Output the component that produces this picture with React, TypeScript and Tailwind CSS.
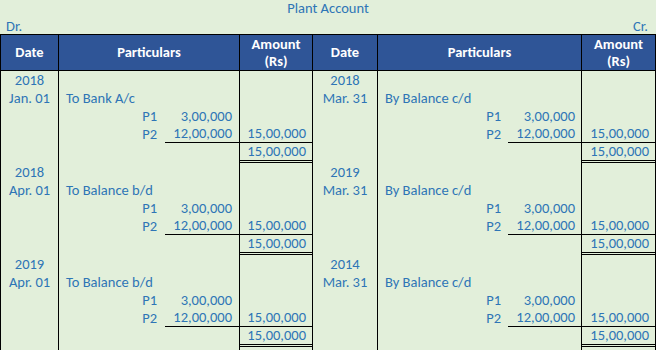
import React from 'react'

type Side = { date?: string; part?: string; sub?: [string, string]; amt?: string }
type Kind = 'plain' | 'p2' | 'total' | 'empty'

const grid = 'grid grid-cols-[59px_181px_73px_65px_204px_74px]'
const font = "font-['Calibri','Carlito','Open_Sans',sans-serif]"

const blocks = [
  { ly: '2018', ld: 'Jan. 01', lp: 'To Bank A/c', ry: '2018', rd: 'Mar. 31', rp: 'By Balance c/d' },
  { ly: '2018', ld: 'Apr. 01', lp: 'To Balance b/d', ry: '2019', rd: 'Mar. 31', rp: 'By Balance c/d' },
  { ly: '2019', ld: 'Apr. 01', lp: 'To Balance b/d', ry: '2014', rd: 'Mar. 31', rp: 'By Balance c/d' },
]

function Cells({ s, kind, right }: { s: Side; kind: Kind; right?: boolean }) {
  const amtBorder =
    kind === 'p2' ? 'border-b border-black' : kind === 'total' ? 'border-b-[3px] border-double border-black' : ''
  return (
    <>
      <div className={`flex items-center justify-center border-r border-black ${right ? '' : 'border-l'}`}>
        {s.date}
      </div>
      <div className={`flex items-stretch border-r border-black ${s.sub ? 'justify-end' : ''}`}>
        {s.part && <span className="flex items-center pl-[7px]">{s.part}</span>}
        {s.sub && (
          <>
            <span className={`flex items-center ${right ? 'mr-[7px]' : 'mr-2'}`}>{s.sub[0]}</span>
            <span
              className={`flex items-center justify-end ${right ? 'w-[73px] pr-[6px]' : 'w-[74px] pr-[7px]'} ${
                kind === 'p2' ? 'border-b border-black' : ''
              }`}
            >
              {s.sub[1]}
            </span>
          </>
        )}
      </div>
      <div className={`flex items-center justify-end pr-[6px] border-r border-black ${amtBorder}`}>{s.amt}</div>
    </>
  )
}

function Row({ l = {}, r = {}, kind = 'plain' }: { l?: Side; r?: Side; kind?: Kind }) {
  const h = kind === 'total' || kind === 'empty' ? 'h-[20px]' : 'h-[18px]'
  return (
    <div className={`${grid} ${h}`}>
      <Cells s={l} kind={kind} />
      <Cells s={r} kind={kind} right />
    </div>
  )
}

export default function App() {
  return (
    <div className={`w-[656px] h-[350px] overflow-hidden bg-[#e2efda] text-[#2e75b6] text-[14.5px] leading-none ${font}`}>
      <div className="h-[17px] flex items-center justify-center">Plant Account</div>
      <div className="h-[17px] flex items-center justify-between pl-[6px] pr-[8px] pt-px">
        <span>Dr.</span>
        <span>Cr.</span>
      </div>
      <div className={`${grid} h-[37px] border-y border-black bg-[#2f5597] text-white font-bold`}>
        <div className="flex items-center justify-center border-x border-black">Date</div>
        <div className="flex items-center justify-center border-r border-black">Particulars</div>
        <div className="flex flex-col items-center justify-center border-r border-black leading-[17px]">
          <span>Amount</span>
          <span>(Rs)</span>
        </div>
        <div className="flex items-center justify-center border-r border-black">Date</div>
        <div className="flex items-center justify-center border-r border-black">Particulars</div>
        <div className="flex flex-col items-center justify-center border-r border-black leading-[17px]">
          <span>Amount</span>
          <span>(Rs)</span>
        </div>
      </div>
      {blocks.map((b, i) => (
        <React.Fragment key={i}>
          <Row l={{ date: b.ly }} r={{ date: b.ry }} />
          <Row l={{ date: b.ld, part: b.lp }} r={{ date: b.rd, part: b.rp }} />
          <Row l={{ sub: ['P1', '3,00,000'] }} r={{ sub: ['P1', '3,00,000'] }} />
          <Row l={{ sub: ['P2', '12,00,000'], amt: '15,00,000' }} r={{ sub: ['P2', '12,00,000'], amt: '15,00,000' }} kind="p2" />
          <Row l={{ amt: '15,00,000' }} r={{ amt: '15,00,000' }} kind="total" />
        </React.Fragment>
      ))}
      <Row kind="empty" />
    </div>
  )
}
